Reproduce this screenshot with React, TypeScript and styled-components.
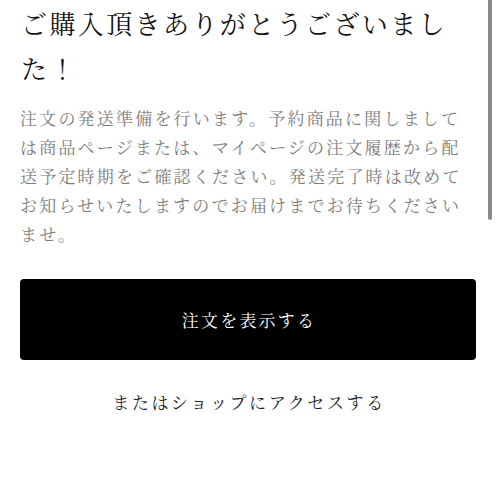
import { createGlobalStyle } from "styled-components";
import styled from "styled-components";

const GlobalStyle = createGlobalStyle`
  html, body {
    margin: 0;
    padding: 0;
    background: #ffffff;
  }
  body {
    font-family: "Noto Serif CJK JP", "Liberation Serif", "Noto Sans CJK JP", serif;
  }
`;

const Page = styled.div`
  position: relative;
  width: 496px;
  height: 496px;
  overflow: hidden;
  box-sizing: border-box;
  padding: 0 20px;
`;

const ScrollThumb = styled.div`
  position: absolute;
  top: 0;
  right: 4px;
  width: 4px;
  height: 220px;
  background: #8a8a8a;
  border-radius: 0 0 2px 2px;
`;

const Title = styled.h1`
  margin: 0;
  padding-left: 1px;
  font-size: 26px;
  font-weight: 400;
  line-height: 45px;
  letter-spacing: 2.4px;
  color: #141414;
`;

const Message = styled.p`
  margin: 13px 0 0;
  font-size: 17px;
  line-height: 29px;
  letter-spacing: 2.2px;
  color: #7c7c7c;
`;

const PrimaryButton = styled.button`
  display: flex;
  align-items: center;
  justify-content: center;
  width: 456px;
  height: 81px;
  margin-top: 31px;
  padding: 0 0 0 2px;
  border: none;
  border-radius: 4px;
  background: #000000;
  color: #ffffff;
  font-family: inherit;
  font-size: 17px;
  letter-spacing: 2.2px;
  cursor: pointer;
`;

const ShopLink = styled.a`
  display: block;
  margin-top: 27px;
  padding-left: 2px;
  text-align: center;
  font-size: 17px;
  line-height: 30px;
  letter-spacing: 2.6px;
  color: #222222;
  text-decoration: none;
`;

export default function App() {
  return (
    <>
      <GlobalStyle />
      <Page>
        <ScrollThumb />
        <Title>ご購入頂きありがとうございました！</Title>
        <Message>
          注文の発送準備を行います。予約商品に関しましては商品ページまたは、マイページの注文履歴から配送予定時期をご確認ください。発送完了時は改めてお知らせいたしますのでお届けまでお待ちくださいませ。
        </Message>
        <PrimaryButton>注文を表示する</PrimaryButton>
        <ShopLink href="#">またはショップにアクセスする</ShopLink>
      </Page>
    </>
  );
}
